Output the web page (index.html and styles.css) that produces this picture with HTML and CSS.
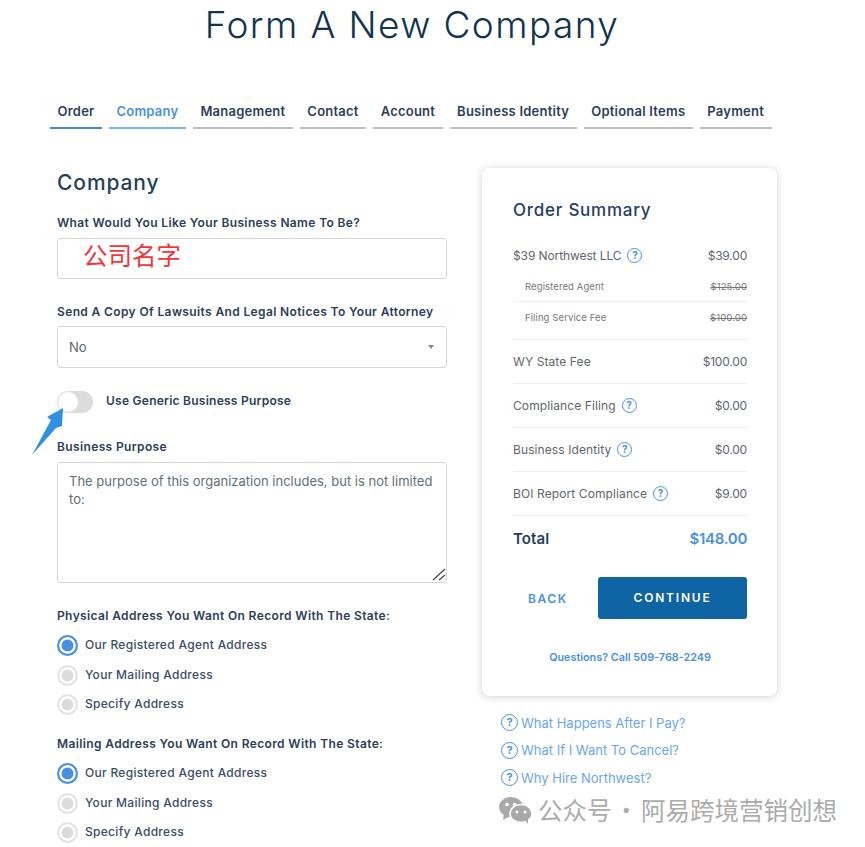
FILE: index.html
```html
<!DOCTYPE html>
<html lang="en">
<head>
    <meta charset="UTF-8">
    <meta name="viewport" content="width=device-width, initial-scale=1.0">
    <title>Form A New Company</title>
    <link rel="stylesheet" href="styles.css">
</head>
<body>
<div id="app">
    <h1 class="page-title">Form A New Company</h1>

    <nav class="tabs">
        <a class="tab done">Order</a>
        <a class="tab active">Company</a>
        <a class="tab">Management</a>
        <a class="tab">Contact</a>
        <a class="tab">Account</a>
        <a class="tab">Business Identity</a>
        <a class="tab">Optional Items</a>
        <a class="tab">Payment</a>
    </nav>

    <div class="columns">
        <form class="company-form">
            <h2>Company</h2>

            <label class="field-label">What Would You Like Your Business Name To Be?</label>
            <input class="text-input name-input" type="text" value="公司名字">

            <label class="field-label attorney-label">Send A Copy Of Lawsuits And Legal Notices To Your Attorney</label>
            <div class="select-wrap">
                <select class="select-input"><option>No</option></select>
            </div>

            <div class="toggle-row">
                <span class="toggle"><span class="knob"></span></span>
                <span class="toggle-label">Use Generic Business Purpose</span>
            </div>

            <label class="field-label purpose-label">Business Purpose</label>
            <div class="purpose-wrap">
                <textarea class="purpose-input">The purpose of this organization includes, but is not limited to:</textarea>
                <svg class="grip" width="14" height="14" viewBox="0 0 14 14">
                    <path d="M1 13L13 2M7 13L13 8" stroke="#444" stroke-width="1.2" fill="none"/>
                </svg>
            </div>

            <fieldset class="radio-group">
                <legend class="field-label">Physical Address You Want On Record With The State:</legend>
                <label class="radio-row"><input type="radio" name="physical" checked>Our Registered Agent Address</label>
                <label class="radio-row"><input type="radio" name="physical">Your Mailing Address</label>
                <label class="radio-row"><input type="radio" name="physical">Specify Address</label>
            </fieldset>

            <fieldset class="radio-group">
                <legend class="field-label">Mailing Address You Want On Record With The State:</legend>
                <label class="radio-row"><input type="radio" name="mailing" checked>Our Registered Agent Address</label>
                <label class="radio-row"><input type="radio" name="mailing">Your Mailing Address</label>
                <label class="radio-row"><input type="radio" name="mailing">Specify Address</label>
            </fieldset>
        </form>

        <aside class="side">
            <div class="summary">
                <h3>Order Summary</h3>
                <div class="line main"><span>$39 Northwest LLC <i class="help">?</i></span><span class="amount">$39.00</span></div>
                <div class="line sub"><span>Registered Agent</span><s>$125.00</s></div>
                <div class="line sub last"><span>Filing Service Fee</span><s>$100.00</s></div>
                <div class="line"><span>WY State Fee</span><span class="amount">$100.00</span></div>
                <div class="line"><span>Compliance Filing <i class="help">?</i></span><span class="amount">$0.00</span></div>
                <div class="line"><span>Business Identity <i class="help">?</i></span><span class="amount">$0.00</span></div>
                <div class="line"><span>BOI Report Compliance <i class="help">?</i></span><span class="amount">$9.00</span></div>
                <div class="line total"><span>Total</span><span class="total-amount">$148.00</span></div>
                <div class="actions">
                    <a class="back">BACK</a>
                    <a class="continue">CONTINUE</a>
                </div>
                <p class="questions">Questions? Call 509-768-2249</p>
            </div>
            <ul class="faq">
                <li><i class="help">?</i>What Happens After I Pay?</li>
                <li><i class="help">?</i>What If I Want To Cancel?</li>
                <li><i class="help">?</i>Why Hire Northwest?</li>
            </ul>
        </aside>
    </div>

    <!-- annotation arrow pasted over the toggle -->
    <svg class="arrow" width="40" height="56" viewBox="0 0 40 56">
        <polygon points="31,1 15,10 19,13 0,48 24,21 30,19" fill="#3091e3"/>
    </svg>

    <div class="watermark">
        <svg width="33" height="27" viewBox="0 0 33 27">
            <ellipse cx="12" cy="10" rx="12" ry="10" fill="#a9a9a9"/>
            <polygon points="5,16 4,23 11,19" fill="#a9a9a9"/>
            <ellipse cx="22" cy="16.5" rx="11" ry="9" fill="#a9a9a9" stroke="#fff" stroke-width="1.5"/>
            <polygon points="26,23 29,27 29,21" fill="#a9a9a9"/>
            <circle cx="8" cy="7.5" r="1.8" fill="#fff"/>
            <circle cx="15.500" cy="7.5" r="1.8" fill="#fff"/>
            <circle cx="18" cy="15" r="1.500" fill="#fff"/>
            <circle cx="26" cy="15" r="1.500" fill="#fff"/>
        </svg>
        <span>公众号 · 阿易跨境营销创想</span>
    </div>
</div>
</body>
</html>
```

FILE: styles.css
```css
* { box-sizing: border-box; }
html, body { margin: 0; height: 847px; overflow: hidden; }
body { font-family: Inter, "Noto Sans", sans-serif; background: #fff; color: #2c3e5c; }
#app { position: relative; width: 865px; height: 847px; overflow: hidden; }

.page-title { margin: 0; padding: 2px 41px 0 0; height: 50px; text-align: center; font-size: 37px; line-height: 46px; font-weight: 300; color: #12344f; letter-spacing: 1.4px; }

.tabs { display: flex; gap: 7px; margin: 48px 0 0 50px; }
.tab { display: block; padding: 3px 7.500px 0; height: 31px; font-size: 13px; line-height: 20px; font-weight: 600; color: #2c3e5c; letter-spacing: 0.23px; border-bottom: 2px solid #bdbdbd; white-space: nowrap; }
.tab.done { border-color: #3f88e0; }
.tab.active { color: #4a90e2; border-color: #77b6f3; }

.columns { display: flex; gap: 35px; margin: 39px 0 0 57px; }
.company-form { width: 390px; flex: none; }
.company-form h2 { margin: 0; padding-top: 2px; height: 47px; font-size: 21px; line-height: 25px; font-weight: 500; color: #253f60; letter-spacing: 0.9px; }

.field-label { display: block; padding: 0; font-size: 12px; line-height: 16px; font-weight: 600; color: #2c3e5c; letter-spacing: 0.37px; }
.text-input { display: block; width: 100%; height: 41px; margin-top: 7px; border: 1px solid #d6d6d6; border-radius: 3px; outline: none; }
.name-input { padding: 0 0 8px 25px; font-family: "Noto Sans CJK SC", sans-serif; font-size: 24.500px; color: #f5333a; }

.attorney-label { margin-top: 25px; }
.select-wrap { position: relative; margin-top: 6px; }
.select-wrap::after { content: ""; position: absolute; right: 13px; top: 19px; border: 3.500px solid transparent; border-top: 4px solid #888; border-bottom: 0; }
.select-input { display: block; width: 100%; height: 42px; padding: 0 11px; appearance: none; background: #fff; border: 1px solid #d6d6d6; border-radius: 3px; font-family: inherit; font-size: 13px; color: #5c6670; }

.toggle-row { display: flex; align-items: flex-start; gap: 13px; margin-top: 23px; height: 22px; }
.toggle { display: block; width: 36px; height: 22px; padding: 1px; border-radius: 11px; background: #dcdcdc; flex: none; }
.knob { display: block; width: 20px; height: 20px; border-radius: 50%; background: #fff; }
.toggle-label { font-size: 12px; line-height: 20px; font-weight: 600; letter-spacing: 0.25px; }

.purpose-label { margin-top: 26px; }
.purpose-wrap { position: relative; margin-top: 7px; }
.purpose-input { display: block; width: 100%; height: 121px; padding: 9px 11px; resize: none; border: 1px solid #d6d6d6; border-radius: 3px; font-family: inherit; font-size: 13px; line-height: 18px; color: #5f7078; outline: none; }
.grip { position: absolute; right: 1px; bottom: 2px; }

.radio-group { margin: 25px 0 0; padding: 0; border: 0; }
.radio-group + .radio-group { margin-top: 12.500px; }
.radio-group legend { margin-bottom: 11px; }
.radio-row { display: flex; align-items: flex-start; gap: 7px; height: 29.500px; font-size: 12px; line-height: 19px; font-weight: 500; letter-spacing: 0.3px; color: #3a4c68; }
.radio-row input { width: 21px; height: 21px; margin: 0; appearance: none; flex: none; border-radius: 50%; background: #dcdcdc; border: 2px solid #e4e4e4; box-shadow: inset 0 0 0 2.500px #fff; }
.radio-row input:checked { background: #4a90e2; border-color: #4a90e2; }

.side { width: 295px; flex: none; }
.summary { height: 528px; padding: 30px 30px 0 31px; background: #fff; border-radius: 8px; box-shadow: 0 1px 8px rgba(0,0,0,0.18); }
.summary h3 { margin: 0; height: 41px; font-size: 17px; line-height: 24px; font-weight: 500; color: #253f60; letter-spacing: 0.75px; }

.line { display: flex; justify-content: space-between; align-items: center; height: 44px; padding-bottom: 1px; border-top: 1px solid #efefef; font-size: 12px; font-weight: 400; letter-spacing: 0.1px; color: #5f666d; }
.line > span:first-child { display: flex; align-items: center; gap: 6px; }
.line .amount { letter-spacing: -0.2px; }
.line.main { height: 31px; padding: 2px 0 1px; border-top: 0; letter-spacing: -0.1px; }
.line.sub { height: 32px; padding: 1px 0 0 12px; font-size: 9.500px; color: #777; border-top: 0; border-bottom: 1px solid #efefef; }
.line.sub.last { height: 37px; padding-bottom: 7px; border-bottom: 0; }
.line.total { height: 46px; padding-bottom: 0; font-size: 15px; font-weight: 600; color: #1f4258; }
.total-amount { color: #4a90e2; letter-spacing: -0.3px; }

.help { display: inline-flex; justify-content: center; align-items: center; width: 15px; height: 15px; border: 1.500px solid #4a90e2; border-radius: 50%; font-style: normal; font-size: 10px; line-height: 1; font-weight: 700; color: #4a90e2; }

.actions { display: flex; justify-content: space-between; align-items: center; margin-top: 16px; }
.back { padding-left: 15px; font-size: 12px; font-weight: 600; letter-spacing: 1.6px; color: #4a90e2; }
.continue { display: block; width: 149px; height: 42px; background: #0f64a3; border-radius: 3px; text-align: center; font-size: 12px; line-height: 42px; font-weight: 600; letter-spacing: 1.800px; color: #fff; }
.questions { margin: 32px 0 0; text-align: center; font-size: 10.800px; line-height: 14px; font-weight: 600; color: #4a90e2; }

.faq { list-style: none; margin: 13px 0 0 19px; padding: 0; }
.faq li { display: flex; align-items: center; gap: 3px; height: 27.500px; font-size: 13px; color: #6aa6ee; }
.faq .help { width: 17px; height: 17px; font-size: 11px; }

.arrow { position: absolute; left: 32px; top: 407px; }
.watermark { position: absolute; left: 499px; top: 794px; display: flex; align-items: center; gap: 6px; font-family: "Noto Sans CJK SC", sans-serif; font-size: 24.500px; line-height: 32px; word-spacing: -3px; color: #ababab; white-space: nowrap; }
```
